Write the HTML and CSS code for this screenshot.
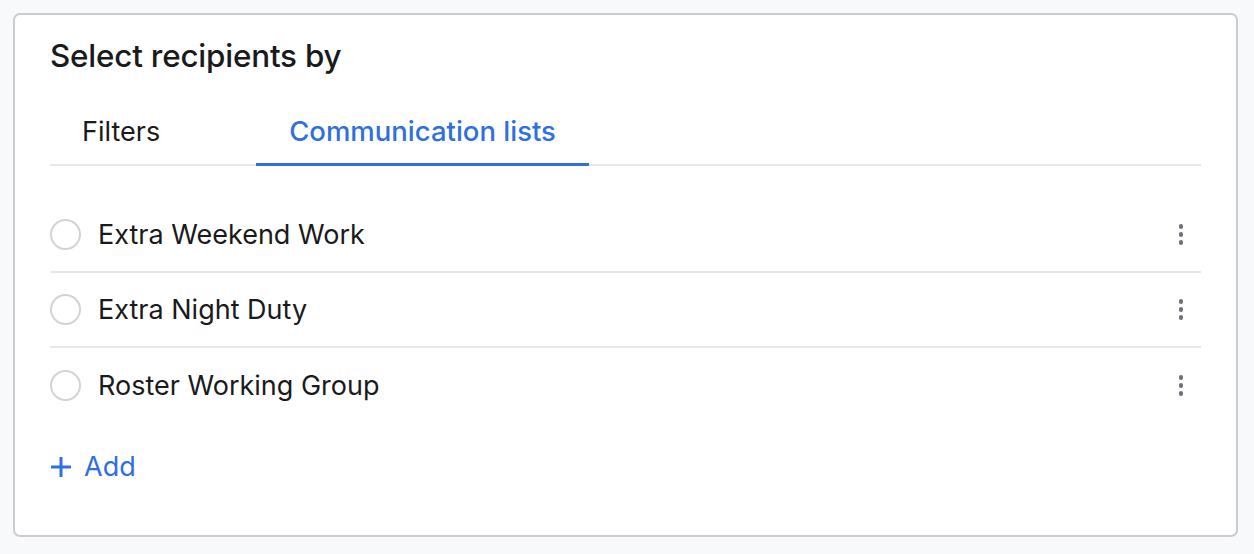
FILE: index.html
```html
<!DOCTYPE html>
<html lang="en">
<head>
    <meta charset="UTF-8">
    <meta name="viewport" content="width=device-width, initial-scale=1.0">
    <title>Select recipients</title>
    <link rel="stylesheet" href="styles.css">
</head>
<body>
    <div class="card">
        <h2 class="card-title">Select recipients by</h2>
        <div class="tabs">
            <button class="tab">Filters</button>
            <button class="tab active">Communication lists</button>
        </div>
        <ul class="list">
            <li class="list-item">
                <span class="radio"></span>
                <span class="item-name">Extra Weekend Work</span>
                <span class="kebab"><i></i><i></i><i></i></span>
            </li>
            <li class="list-item">
                <span class="radio"></span>
                <span class="item-name">Extra Night Duty</span>
                <span class="kebab"><i></i><i></i><i></i></span>
            </li>
            <li class="list-item">
                <span class="radio"></span>
                <span class="item-name">Roster Working Group</span>
                <span class="kebab"><i></i><i></i><i></i></span>
            </li>
        </ul>
        <button class="add-button">
            <svg width="22" height="22" viewBox="0 0 22 22"><path d="M11 1v20M1 11h20" stroke="currentColor" stroke-width="3" fill="none"/></svg>
            Add
        </button>
    </div>
</body>
</html>
```
FILE: styles.css
```css
body {
    font-family: 'Inter', 'Liberation Sans', sans-serif;
    background-color: #f8f9fb;
    color: #1a1a1c;
    margin: 0;
    padding: 13px 16px 17px 13px;
}
.card {
    background-color: #fff;
    border: 2px solid #cbcbd0;
    border-radius: 7px;
    padding: 22px 35px 32px 35px;
    height: 524px;
    box-sizing: border-box;
}
.card-title {
    font-size: 31.4px;
    font-weight: 500;
    line-height: 38px;
    margin: 0 0 20px 0;
    letter-spacing: -0.2px;
}
.tabs {
    display: flex;
    gap: 64px;
    border-bottom: 2px solid #e7e7ea;
}
.tab {
    font-family: inherit;
    font-size: 27px;
    line-height: 33px;
    color: #1a1a1c;
    background: none;
    border: none;
    padding: 20px 32px 15px 32px;
    margin-bottom: -2px;
    border-bottom: 3px solid transparent;
    cursor: pointer;
}
.tab.active {
    color: #2f6fdf;
    font-size: 27.5px;
    font-weight: 500;
    padding: 20px 33px 15px 33px;
    border-bottom-color: #2f6fdf;
}
.list {
    list-style: none;
    margin: 32px 0 0 0;
    padding: 0;
}
.list-item {
    display: flex;
    align-items: center;
    height: 75px;
    border-bottom: 2px solid #e7e7ea;
    box-sizing: border-box;
}
.list-item:last-child {
    border-bottom: none;
}
.radio {
    width: 31px;
    height: 31px;
    border: 2px solid #d3d3d7;
    border-radius: 50%;
    box-sizing: border-box;
    margin-right: 17px;
}
.item-name {
    flex: 1;
    font-size: 27px;
}
.kebab {
    display: flex;
    flex-direction: column;
    gap: 3.5px;
    margin-right: 18px;
}
.kebab i {
    width: 4.5px;
    height: 4.5px;
    border-radius: 50%;
    background-color: #6c6f78;
}
.add-button {
    display: flex;
    align-items: center;
    gap: 12px;
    font-family: inherit;
    font-size: 27px;
    line-height: 33px;
    color: #2f6fdf;
    background: none;
    border: none;
    padding: 0;
    margin-top: 27px;
    cursor: pointer;
}
```
